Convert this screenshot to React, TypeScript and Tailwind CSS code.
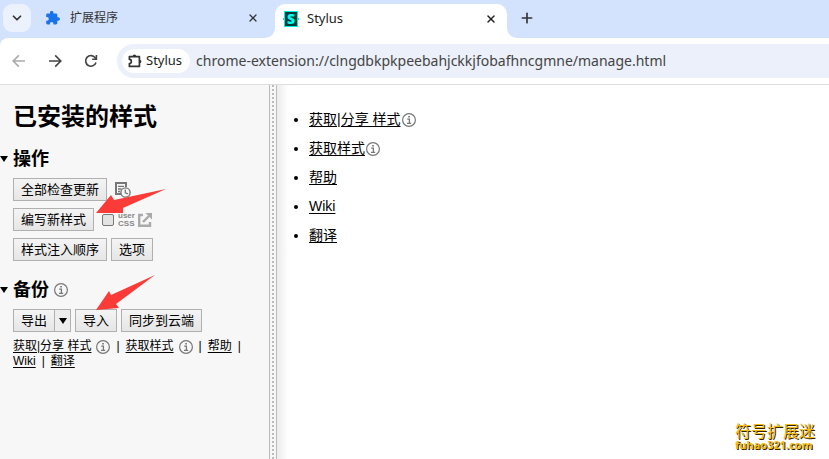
import React from 'react';
import { ChevronDown, Plus, X } from 'lucide-react';

const buttonClass =
  "h-[23px] border border-[#b0b0b0] bg-linear-to-b from-[#f4f4f4] to-[#e6e6e6] px-[7px] text-[13px] leading-[20px] whitespace-nowrap text-black";

function InfoIcon({ className = '' }: { className?: string }) {
  return (
    <svg viewBox="0 0 14 14" className={`h-3.5 w-3.5 shrink-0 ${className}`} fill="none" stroke="#777" aria-hidden="true">
      <circle cx="7" cy="7" r="6.4" strokeWidth="1.2" />
      <path d="M6.2 3h1.7v1.6H6.2z" fill="#777" stroke="none" />
      <path d="M5.2 6.2h2.2v4M5 10.3h4.2" strokeWidth="1.3" />
    </svg>
  );
}

function PuzzleIcon() {
  return (
    <svg viewBox="0 0 14 14" className="h-3.5 w-3.5" fill="#1a73e8" aria-hidden="true">
      <path d="M12.2 6.3h-.9V3.8c0-.8-.6-1.4-1.4-1.4H7.4v-.8a1.7 1.7 0 0 0-3.4 0v.8H1.5C.7 2.4.2 3 .2 3.8v2.3H1a1.8 1.8 0 0 1 0 3.6H.2V12c0 .8.6 1.4 1.3 1.4h2.4v-.7a1.8 1.8 0 0 1 3.6 0v.7h2.4c.8 0 1.4-.6 1.4-1.4V9.8h.9a1.7 1.7 0 0 0 0-3.5z" />
    </svg>
  );
}

function ExtensionIcon() {
  return (
    <svg viewBox="0 0 14 14" className="h-3.5 w-3.5" fill="none" stroke="#333" strokeWidth="1.7" aria-hidden="true">
      <path d="M1.4 2.6h10v9.8h-10V9.6c2.6-.2 2.6-4 0-4.2z" strokeLinejoin="round" />
      <path d="M4.6 2.3a1.8 1.8 0 0 1 3.6 0zM11.6 5.7a1.8 1.8 0 0 1 0 3.6z" fill="#333" stroke="none" />
    </svg>
  );
}

function ArrowIcon({ flip = false }: { flip?: boolean }) {
  return (
    <svg viewBox="0 0 14 14" className={`h-3.5 w-3.5 ${flip ? 'rotate-180' : ''}`} fill="none" stroke="currentColor" strokeWidth="1.6" aria-hidden="true">
      <path d="M1 7h12M7.2 1.4 12.8 7l-5.6 5.6" />
    </svg>
  );
}

function ReloadIcon() {
  return (
    <svg viewBox="0 0 14 14" className="h-3.5 w-3.5" fill="none" stroke="currentColor" strokeWidth="1.6" aria-hidden="true">
      <path d="M12 8.5A5.3 5.3 0 1 1 11.2 3.7L12.3 5" />
      <path d="M12.4 1v4.3H8.2" />
    </svg>
  );
}

function HistoryIcon() {
  return (
    <svg viewBox="0 0 16 17" className="h-[17px] w-4" fill="none" stroke="#777" aria-hidden="true">
      <path d="M6 13H1V2h10v4" strokeWidth="2" />
      <path d="M3 5.3h6M3 8h3.5M3 10.5h2" strokeWidth="1.3" />
      <circle cx="10.5" cy="11.5" r="4.6" fill="#f7f7f7" strokeWidth="1.4" />
      <path d="M10.3 8.5v3.3l2.7 1" strokeWidth="1.3" />
    </svg>
  );
}

function ExternalIcon() {
  return (
    <svg viewBox="0 0 14 14" className="h-3.5 w-3.5" fill="none" stroke="#aaa" strokeWidth="2.4" aria-hidden="true">
      <path d="M5 2H1.2v10.8H12V9" />
      <path d="M5 9l6-6" />
      <path d="M7.5 0H14v6.5z" fill="#aaa" stroke="none" />
    </svg>
  );
}

function StylusLogo() {
  return (
    <span className="relative flex h-4 w-4 items-center justify-center">
      <svg viewBox="0 0 16 16" className="absolute inset-0 h-4 w-4" aria-hidden="true">
        <path d="M1 0h14v7h1v2h-1v7H1V9H0V7h1z" fill="#0ed" />
        <path d="M2 1h12v14H2z" fill="#043b3b" />
      </svg>
      <span className="relative text-sm leading-4 font-black text-[#0fe]">S</span>
    </span>
  );
}

function Caret() {
  return (
    <svg viewBox="0 0 8 6" className="h-1.5 w-2" aria-hidden="true">
      <path d="M0 0h8L4 6z" fill="#000" />
    </svg>
  );
}

const links = [
  { label: '获取|分享 样式', info: true },
  { label: '获取样式', info: true },
  { label: '帮助', info: false },
  { label: 'Wiki', info: false },
  { label: '翻译', info: false },
];

function TabStrip() {
  return (
    <div className="flex h-[38px] items-start bg-[#d3e3fd] text-xs text-[#333]">
      <button aria-label="搜索标签页" className="mt-1 ml-[3px] flex h-7 w-7 items-center justify-center rounded-[9px] bg-[#ebf1fd]">
        <ChevronDown className="h-3.5 w-3.5" strokeWidth={3} />
      </button>
      <div className="ml-[15px] flex h-9 w-[213px] items-center">
        <PuzzleIcon />
        <span className="ml-2.5 flex-1">扩展程序</span>
        <button aria-label="关闭"><X className="h-3 w-3" strokeWidth={2.5} /></button>
      </div>
      <div className="relative ml-4 flex h-[34px] w-[232px] items-center self-end rounded-t-[10px] bg-white pr-2.5 pb-1 pl-2 text-[#222]">
        <svg viewBox="0 0 10 10" className="absolute bottom-0 -left-2.5 h-2.5 w-2.5" fill="#fff" aria-hidden="true"><path d="M10 0v10H0A10 10 0 0 0 10 0z" /></svg>
        <svg viewBox="0 0 10 10" className="absolute -right-2.5 bottom-0 h-2.5 w-2.5" fill="#fff" aria-hidden="true"><path d="M0 0v10h10A10 10 0 0 1 0 0z" /></svg>
        <StylusLogo />
        <span className="ml-2 flex-1 text-[13px]">Stylus</span>
        <button aria-label="关闭"><X className="h-3 w-3" strokeWidth={3} /></button>
      </div>
      <button aria-label="新标签页" className="mt-2.5 ml-3"><Plus className="h-4 w-4" strokeWidth={2.5} /></button>
    </div>
  );
}

function Toolbar() {
  return (
    <div className="bg-[#d3e3fd]">
      <div className="flex h-[47px] items-center rounded-tl-lg border-b border-[#dedede] bg-white pl-3 text-[#444]">
        <button aria-label="后退" className="text-[#aaa]"><ArrowIcon flip /></button>
        <button aria-label="前进" className="ml-[22px]"><ArrowIcon /></button>
        <button aria-label="重新加载" className="ml-[22px]"><ReloadIcon /></button>
        <div className="ml-[19px] flex h-[34px] flex-1 items-center rounded-l-full bg-[#ebf0fa] pl-[5px]">
          <span className="flex h-6 items-center gap-1 rounded-full bg-white pr-2 pl-1.5 text-[13px] text-[#222]">
            <ExtensionIcon />
            Stylus
          </span>
          <input
            aria-label="地址"
            readOnly
            className="ml-1.5 min-w-0 flex-1 bg-transparent text-sm outline-none"
            value="chrome-extension://clngdbkpkpeebahjckkjfobafhncgmne/manage.html"
          />
        </div>
      </div>
    </div>
  );
}

function Sidebar() {
  return (
    <aside className="w-[269px] shrink-0 bg-[#f7f7f7] pt-3.5">
      <h1 className="pl-[13px] text-2xl leading-9 font-bold">已安装的样式</h1>

      <section className="relative mt-3">
        <h2 className="flex items-center gap-[5px] text-lg leading-6 font-bold"><Caret />操作</h2>
        <div className="mt-[7px] flex flex-col gap-[7px] pl-[13px]">
          <div className="flex h-[23px] items-center gap-2">
            <button className={buttonClass}>全部检查更新</button>
            <button aria-label="更新记录"><HistoryIcon /></button>
          </div>
          <div className="flex h-[23px] items-center">
            <button className={buttonClass}>编写新样式</button>
            <label className="ml-2 flex items-center gap-1 text-[#888]">
              <input type="checkbox" className="h-3 w-3 appearance-none rounded-xs border border-[#777] bg-[#e3e3e3]" />
              <span className="flex w-4 flex-col text-[8px] leading-2 font-bold">
                <span>user</span>
                <span>CSS</span>
              </span>
            </label>
            <a href="#usercss" aria-label="UserCSS" className="ml-1"><ExternalIcon /></a>
          </div>
          <div className="flex gap-1">
            <button className={buttonClass}>样式注入顺序</button>
            <button className={buttonClass}>选项</button>
          </div>
        </div>
        {/* pointer to the new style button */}
        <svg viewBox="0 0 70 25" className="pointer-events-none absolute top-[42px] left-24 h-[25px] w-[70px]" fill="#fb3b37" aria-hidden="true">
          <path d="M0 24 15 6l3 5L70 0 27 19v5z" />
        </svg>
      </section>

      <section className="relative mt-[17px]">
        <h2 className="flex items-center gap-[5px] text-lg leading-6 font-bold"><Caret />备份<InfoIcon /></h2>
        <div className="mt-[7px] flex gap-1 pl-[13px]">
          <div className="flex">
            <button className={buttonClass}>导出</button>
            <button aria-label="导出选项" className="flex w-4 items-center justify-center border border-l-0 border-[#b0b0b0] bg-[#ededed]"><Caret /></button>
          </div>
          <button className={buttonClass}>导入</button>
          <button className={buttonClass}>同步到云端</button>
        </div>
        {/* pointer to the import button */}
        <svg viewBox="0 0 59 35" className="pointer-events-none absolute -top-[3px] left-24 h-[35px] w-[59px]" fill="#fb3b37" aria-hidden="true">
          <path d="M0 35 13 16l2 4L59 0 20 29l3 4z" />
        </svg>
      </section>

      <nav className="mt-[7px] flex flex-wrap pr-2 pl-[13px] text-xs leading-[15px]">
        {links.map((link, i) => (
          <span key={link.label} className="flex items-center">
            <a href="#help" className="underline underline-offset-2">{link.label}</a>
            {link.info && <InfoIcon className="ml-[5px]" />}
            {i < links.length - 1 && <span className="mx-1.5">|</span>}
          </span>
        ))}
      </nav>
    </aside>
  );
}

export default function App() {
  return (
    <div className="relative flex min-h-screen flex-col bg-white font-['Noto_Sans','Noto_Sans_CJK_SC',sans-serif]">
      <TabStrip />
      <Toolbar />
      <div className="flex flex-1 font-['Liberation_Sans','Noto_Sans_CJK_SC',sans-serif] text-black">
        <Sidebar />
        <div className="flex w-2 shrink-0 justify-center border-x border-[#bbb] bg-[#f7f7f7]">
          <div className="w-0.5 bg-[repeating-linear-gradient(to_bottom,#bbb_0_2px,#f7f7f7_2px_4px)]" />
        </div>
        <main className="flex-1 bg-linear-to-r from-[#ececec] to-white to-[12px] pt-5">
          <ul className="list-disc pl-8 text-sm leading-[29px]">
            {links.map((link) => (
              <li key={link.label}>
                <span className="inline-flex items-center">
                  <a href="#help" className="underline underline-offset-2">{link.label}</a>
                  {link.info && <InfoIcon className="ml-px" />}
                </span>
              </li>
            ))}
          </ul>
        </main>
      </div>
      <div className="absolute right-3.5 bottom-2 text-[#f3bd12] [text-shadow:1px_1px_0_#332200]">
        <div className="text-base leading-4">符号扩展迷</div>
        <div className="font-['Open_Sans',sans-serif] text-[11px] leading-3 font-bold">fuhao321.com</div>
      </div>
    </div>
  );
}
